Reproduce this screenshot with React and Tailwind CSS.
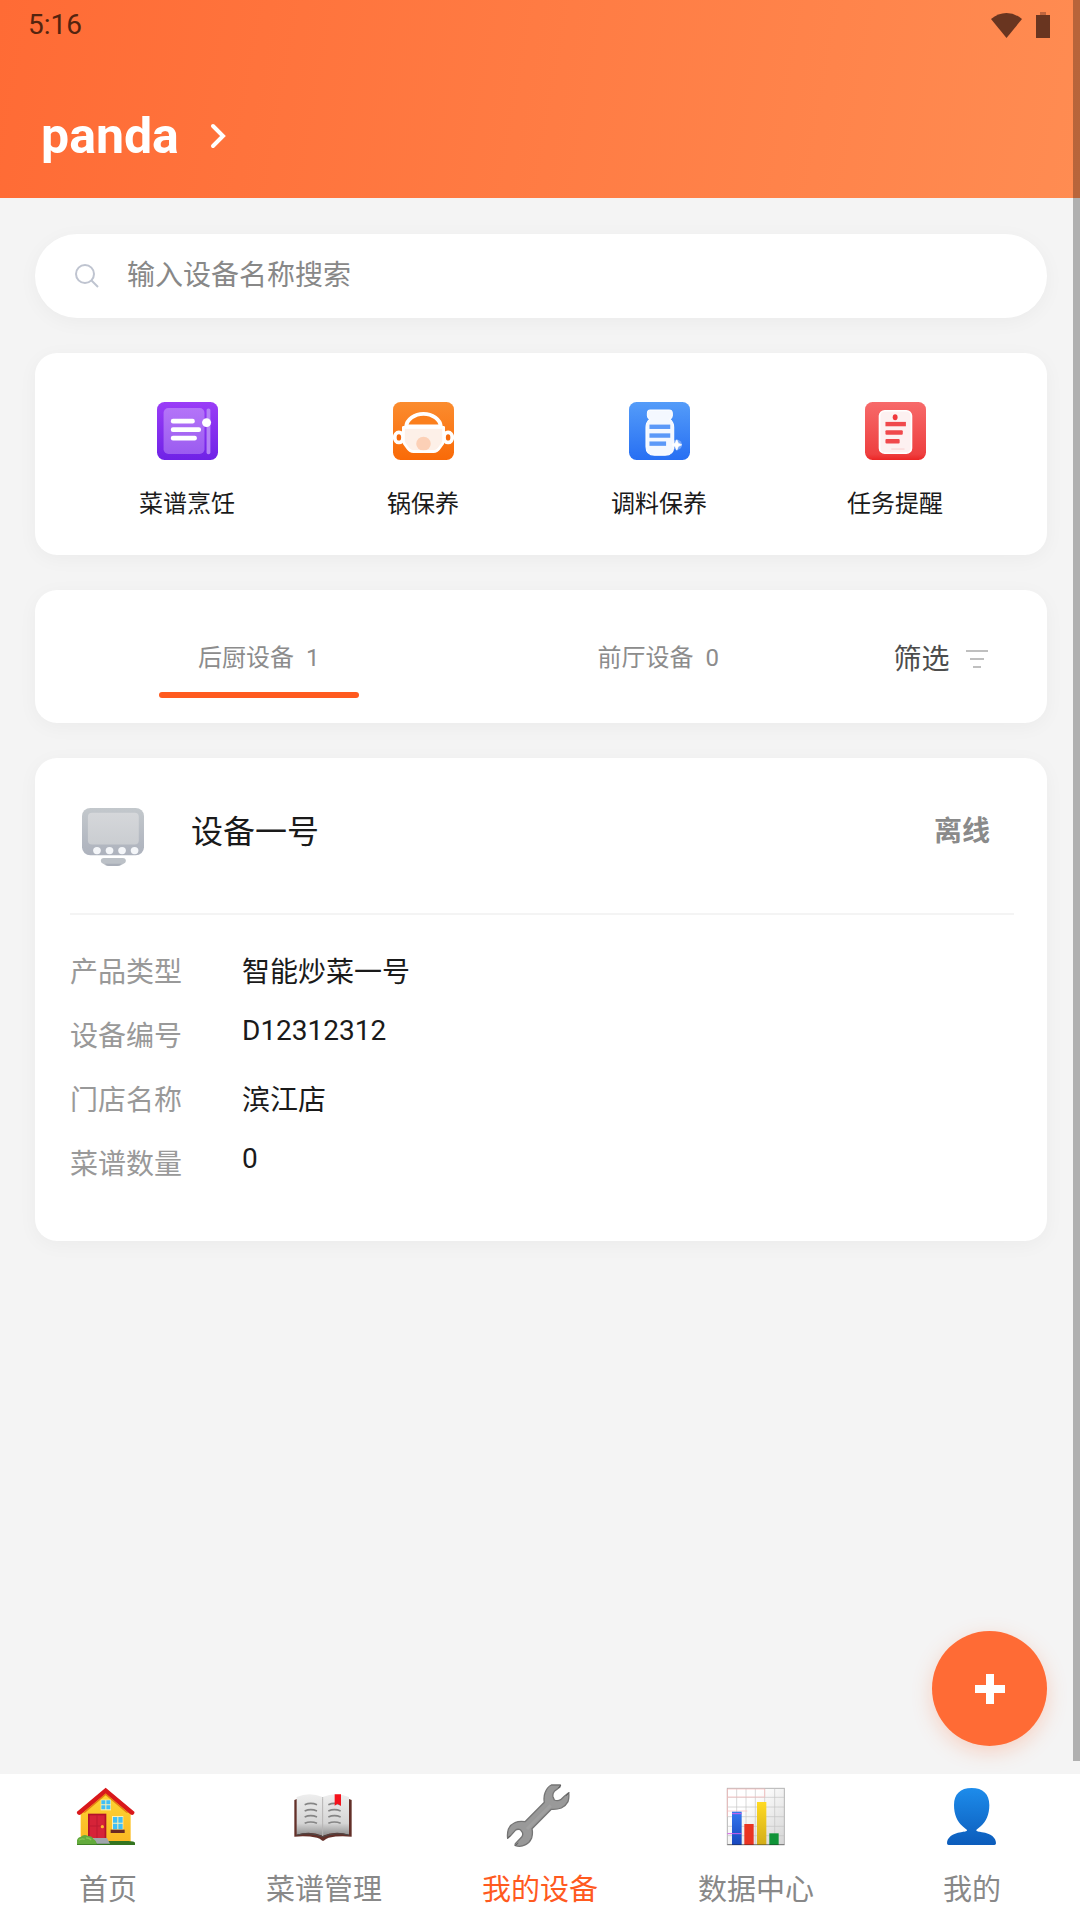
import React, { useState } from "react";

const RecipeIcon = () => (
  <svg viewBox="398 547 176 172" preserveAspectRatio="none" className="w-[61px] h-[58px]" aria-hidden="true">
    <defs>
      <linearGradient id="recipeBg" x1="0" y1="0" x2="0" y2="1">
        <stop offset="0" stopColor="#9a3df7" />
        <stop offset="1" stopColor="#6f22e6" />
      </linearGradient>
      <linearGradient id="recipePage" x1="0" y1="0" x2="0" y2="1">
        <stop offset="0" stopColor="#b474f8" />
        <stop offset="1" stopColor="#9b5cf0" />
      </linearGradient>
    </defs>
    <rect x="398" y="547" width="176" height="172" rx="22" fill="url(#recipeBg)" />
    <rect x="417" y="565" width="118" height="136" rx="14" fill="url(#recipePage)" />
    <rect x="541" y="566" width="11" height="136" rx="5" fill="#b583f6" />
    <rect x="438" y="597" width="69" height="14" rx="6" fill="#fff" />
    <rect x="438" y="622" width="87" height="14" rx="6" fill="#fff" />
    <rect x="438" y="647" width="75" height="14" rx="6" fill="#fff" />
    <circle cx="541" cy="608" r="13" fill="#fff" />
  </svg>
);

const PotIcon = () => (
  <svg viewBox="1083 547 176 172" preserveAspectRatio="none" className="w-[61px] h-[58px]" aria-hidden="true">
    <defs>
      <linearGradient id="potBg" x1="0" y1="0" x2="0" y2="1">
        <stop offset="0" stopColor="#fb8c2e" />
        <stop offset="1" stopColor="#f96a08" />
      </linearGradient>
    </defs>
    <rect x="1083" y="547" width="176" height="172" rx="22" fill="url(#potBg)" />
    <ellipse cx="1100" cy="652" rx="12" ry="15" fill="#f5690c" stroke="#fff" strokeWidth="11" />
    <ellipse cx="1242" cy="652" rx="12" ry="15" fill="#f5690c" stroke="#fff" strokeWidth="11" />
    <path
      d="M1113 622h116v40q0 4-3 9l-10 14q-6 9-16 9h-58q-10 0-16-9l-10-14q-3-5-3-9z"
      fill="#fdf0e8"
      stroke="#fff"
      strokeWidth="8"
      strokeLinejoin="round"
    />
    <path d="M1121 619c2-20 24-37 50-37s48 17 50 37z" fill="#fb7f1c" stroke="#fff" strokeWidth="11" strokeLinejoin="round" />
    <ellipse cx="1171" cy="671" rx="21" ry="21" fill="#fcd0b6" />
    <rect x="1140" y="690" width="62" height="6" fill="#fff" />
  </svg>
);

const BottleIcon = () => (
  <svg viewBox="258 547 176 172" preserveAspectRatio="none" className="w-[61px] h-[58px]" aria-hidden="true">
    <defs>
      <linearGradient id="bottleBg" x1="0" y1="0" x2="0" y2="1">
        <stop offset="0" stopColor="#549cf9" />
        <stop offset="1" stopColor="#276ff3" />
      </linearGradient>
    </defs>
    <rect x="258" y="547" width="176" height="172" rx="22" fill="url(#bottleBg)" />
    <path
      d="M319 571h55q9 0 9 10v7q0 7-7 10 11 10 11 24v58q0 25-25 25h-30q-25 0-25-25v-58q0-14 11-24-7-3-7-10v-7q0-10 8-10z"
      fill="#f4f8ff"
      stroke="#fff"
      strokeWidth="3"
    />
    <rect x="317" y="614" width="60" height="13" fill="#5c99f8" />
    <rect x="317" y="640" width="60" height="13" fill="#5c99f8" />
    <rect x="317" y="664" width="48" height="13" fill="#5c99f8" />
    <circle cx="396" cy="674" r="15" fill="#fff" opacity=".35" />
    <path d="M396 659l4 10 10 5-10 5-4 11-5-11-9-5 9-5z" fill="#fff" stroke="#fff" strokeWidth="2" />
  </svg>
);

const TaskIcon = () => (
  <svg viewBox="944 547 176 172" preserveAspectRatio="none" className="w-[61px] h-[58px]" aria-hidden="true">
    <defs>
      <linearGradient id="taskBg" x1="0" y1="0" x2="0" y2="1">
        <stop offset="0" stopColor="#f76a6a" />
        <stop offset=".9" stopColor="#ee4040" />
        <stop offset="1" stopColor="#ec2525" />
      </linearGradient>
    </defs>
    <rect x="944" y="547" width="176" height="172" rx="22" fill="url(#taskBg)" />
    <rect x="986" y="573" width="92" height="126" rx="15" fill="#fdf1f1" stroke="#fff" strokeWidth="5" />
    <ellipse cx="1031" cy="592" rx="7" ry="9" fill="#f0383c" />
    <rect x="1003" y="606" width="59" height="13" fill="#f0494c" />
    <rect x="1003" y="631" width="50" height="13" rx="3" fill="#f0494c" />
    <rect x="1003" y="657" width="41" height="13" rx="3" fill="#f0494c" />
    <rect x="1020" y="684" width="38" height="5" fill="#fbdcdc" />
  </svg>
);

const DeviceIcon = () => (
  <svg viewBox="180 685 178 173" preserveAspectRatio="none" className="w-[62px] h-[58px]" aria-hidden="true">
    <defs>
      <linearGradient id="deviceBody" x1="0" y1="0" x2="0" y2="1">
        <stop offset="0" stopColor="#c3c8cc" />
        <stop offset="1" stopColor="#adb2bd" />
      </linearGradient>
      <linearGradient id="deviceScreen" x1="0" y1="0" x2="0" y2="1">
        <stop offset="0" stopColor="#d5d7da" />
        <stop offset="1" stopColor="#cacdd1" />
      </linearGradient>
    </defs>
    <rect x="180" y="685" width="178" height="141" rx="24" fill="url(#deviceBody)" />
    <rect x="197" y="699" width="146" height="95" rx="12" fill="url(#deviceScreen)" />
    <circle cx="223" cy="812" r="11" fill="#f4f6f9" />
    <circle cx="259" cy="812" r="11" fill="#f4f6f9" />
    <circle cx="295" cy="812" r="11" fill="#f4f6f9" />
    <circle cx="331" cy="812" r="11" fill="#f4f6f9" />
    <path d="M243 834h54q9 0 9 9 0 6-8 9-8 6-16 6h-26q-8 0-14-6-8-3-8-9 0-9 9-9z" fill="#bcc1c7" />
    <path d="M246 851h48q-6 7-14 7h-22q-8 0-12-7z" fill="#a9aeb8" />
  </svg>
);

const HomeEmoji = () => (
  <svg viewBox="228 72 192 192" className="w-16 h-16 overflow-visible" aria-hidden="true">
    <defs>
      <linearGradient id="wall" x1="0" y1="0" x2="0" y2="1">
        <stop offset="0" stopColor="#fdd835" />
        <stop offset="1" stopColor="#fbb823" />
      </linearGradient>
    </defs>
    <path d="M242 246V155l75-66 75 66v91z" fill="url(#wall)" />
    <path d="M231 251q2-8 20-8h134q18 0 20 5v7H231z" fill="#33741f" />
    <path d="M317 83l-86 72q-2 4 2 8 5 4 10 0l74-62 74 62q6 4 10 0 4-4 2-8z" fill="#d9181b" />
    <path d="M317 100l-68 58h6l62-52 62 52h6z" fill="#e57e12" />
    <rect x="264" y="161" width="55" height="73" fill="#b3122a" />
    <rect x="269" y="166" width="45" height="68" fill="#d62338" />
    <path d="M291 166v68M269 198h45" stroke="#bd1b30" strokeWidth="3" />
    <circle cx="307" cy="200" r="5" fill="#fdb92b" />
    <rect x="302" y="119" width="31" height="32" fill="#fff0b0" />
    <path d="M304 121h12v12h-12zM319 121h12v12h-12zM304 136h12v12h-12zM319 136h12v12h-12z" fill="#40bff5" />
    <rect x="336" y="168" width="34" height="41" fill="#fff0b0" />
    <path d="M339 171h13v17h-13zM355 171h13v17h-13zM339 191h13v17h-13zM355 191h13v17h-13z" fill="#40bff5" />
    <rect x="332" y="209" width="42" height="10" fill="#6b2a23" />
    <path d="M279 234h42l9 17h-40z" fill="#a2a5ad" />
    <path d="M231 253v-12q2-9 11-10 10-11 22-3 13 0 16 9 10 6 10 16z" fill="#63ab3c" />
    <path d="M237 241q8-7 17-3M258 234q12-1 15 7" stroke="#82c653" strokeWidth="4" fill="none" />
  </svg>
);

const BookEmoji = () => (
  <svg viewBox="876 72 192 192" className="w-16 h-16 overflow-visible" aria-hidden="true">
    <defs>
      <linearGradient id="page" x1="0" y1="0" x2="0" y2="1">
        <stop offset="0" stopColor="#eeeeee" />
        <stop offset=".7" stopColor="#d5d5d5" />
        <stop offset="1" stopColor="#8f8f8f" />
      </linearGradient>
    </defs>
    <path d="M883 120l8-3h156l8 3v110q-38-4-69 3-8 3-15 9h-4q-8-7-16-9-33-7-68-3z" fill="#633029" />
    <path d="M890 111q38-16 78 0v116q-39-16-78-3z" fill="url(#page)" />
    <path d="M968 111q40-16 79 0v113q-40-13-79 3z" fill="url(#page)" />
    <path d="M890 225q40-10 78 5 39-15 79-5" stroke="#4b4b4b" strokeWidth="3" fill="none" />
    <path d="M968 111v117" stroke="#bbb" strokeWidth="3" />
    <path
      d="M914 134q18-8 37 0M914 153q18-8 37 0M914 171q18-8 37 0M914 190q18-8 37 0M985 134q18-8 37 0M985 153q18-8 37 0M985 171q18-8 37 0M985 190q18-8 37 0"
      stroke="#858585"
      strokeWidth="5"
      fill="none"
    />
    <path d="M1004 103h19v35l-10-7-9 6z" fill="#f5121c" />
  </svg>
);

const WrenchEmoji = () => (
  <svg viewBox="384 72 192 192" className="w-16 h-16 overflow-visible" aria-hidden="true">
    <path
      d="M514 75h27l-1 6-17 13q-6 7-4 16l4 10q10 4 19-1l11-10 13-11q2 14-2 27-7 13-20 19-13 5-30 4l-58 58q3 15-1 28-6 14-18 20-17 9-32 2l1-5 19-20q5-6 2-14l-6-8q-9-3-15 2l-16 18-7 6q-2-14 2-27 6-14 20-20 13-6 30-3l58-58q-3-17 3-31 6-15 18-21z"
      fill="#999"
      stroke="#757575"
      strokeWidth="4"
      strokeLinejoin="round"
    />
    <path d="M512 136l-71 71" stroke="#a0a0a0" strokeWidth="9" />
    <path d="M543 75l-8 9M568 98l-10 9M383 234l8-7M406 257l9-8" stroke="#5e5e5e" strokeWidth="3" />
  </svg>
);

const ChartEmoji = () => (
  <svg viewBox="72 72 192 192" className="w-16 h-16 overflow-visible" aria-hidden="true">
    <defs>
      <linearGradient id="sheet" x1="0" y1="0" x2="1" y2="1">
        <stop offset=".3" stopColor="#fff" />
        <stop offset="1" stopColor="#d4d4d4" />
      </linearGradient>
      <linearGradient id="barBlue" x1="0" y1="0" x2="0" y2="1">
        <stop offset="0" stopColor="#3478f0" />
        <stop offset="1" stopColor="#1746bd" />
      </linearGradient>
      <linearGradient id="barYellow" x1="0" y1="0" x2="0" y2="1">
        <stop offset="0" stopColor="#ffda22" />
        <stop offset="1" stopColor="#d3ad19" />
      </linearGradient>
    </defs>
    <rect x="82" y="85" width="171" height="169" fill="url(#sheet)" stroke="#b4b4b4" strokeWidth="3" />
    <path d="M110 85v169M138 85v169M166 85v169M194 85v169M224 85v169" stroke="#c4c4c4" strokeWidth="2" />
    <path d="M82 112h171M82 141h171M82 170h171M82 199h171M82 227h171" stroke="#c4c4c4" strokeWidth="2" />
    <path d="M82 170V87h112v24H82M82 153h60" stroke="#ffb9b9" strokeWidth="2" fill="none" />
    <rect x="96" y="155" width="29" height="100" fill="url(#barBlue)" />
    <rect x="133" y="192" width="28" height="63" fill="#e93423" />
    <rect x="171" y="126" width="28" height="129" fill="url(#barYellow)" />
    <rect x="208" y="220" width="28" height="35" fill="#109438" />
    <path d="M96 161h29M82 221h43" stroke="#d45fe8" strokeWidth="3" />
    <path d="M82 254h171" stroke="#222" strokeWidth="3" opacity=".45" />
  </svg>
);

const UserEmoji = () => (
  <svg viewBox="720 72 192 192" className="w-16 h-16 overflow-visible" aria-hidden="true">
    <defs>
      <linearGradient id="bust" x1="0" y1="0" x2="0" y2="1">
        <stop offset="0" stopColor="#1d8ceb" />
        <stop offset="1" stopColor="#0c5cbb" />
      </linearGradient>
    </defs>
    <path
      d="M815 84c34 0 53 18 53 51 0 30-10 49-25 63-8 7-14 10-14 13 0 4 8 4 17 6 27 4 42 16 42 33q0 5-5 5H746q-5 0-5-5c0-17 16-29 42-33 9-2 18-2 18-6 0-3-7-6-14-13-15-14-25-33-25-63 0-33 19-51 53-51z"
      fill="url(#bust)"
    />
  </svg>
);

const shortcuts = [
  { label: "菜谱烹饪", icon: RecipeIcon },
  { label: "锅保养", icon: PotIcon },
  { label: "调料保养", icon: BottleIcon },
  { label: "任务提醒", icon: TaskIcon },
];

const deviceTabs = [
  { id: "kitchen", label: "后厨设备", count: 1 },
  { id: "hall", label: "前厅设备", count: 0 },
];

const deviceInfo = [
  { label: "产品类型", value: "智能炒菜一号" },
  { label: "设备编号", value: "D12312312", latin: true },
  { label: "门店名称", value: "滨江店" },
  { label: "菜谱数量", value: "0", latin: true },
];

const navItems = [
  { label: "首页", icon: HomeEmoji },
  { label: "菜谱管理", icon: BookEmoji },
  { label: "我的设备", icon: WrenchEmoji, active: true },
  { label: "数据中心", icon: ChartEmoji },
  { label: "我的", icon: UserEmoji },
];

function Header() {
  return (
    <header className="h-[198px] bg-linear-[100deg] from-[#ff6b35] to-[#ff8c52] text-white">
      {/* Status bar */}
      <div className="flex items-center justify-between pl-7 pr-[30px] h-[50px]">
        <span className="text-[28px] text-[#54240f]">5:16</span>
        <div className="flex items-center gap-[14px]">
          <svg viewBox="0 0 31 25" className="w-[31px] h-[25px]" aria-hidden="true">
            <path d="M0 6Q7 0 15.500 0T31 6L15.500 25z" fill="#693520" />
          </svg>
          <svg viewBox="0 0 14 26" className="w-[14px] h-[26px]" aria-hidden="true">
            <path d="M4 0h6v4H4z" fill="#c0663f" />
            <path d="M0 3h14v23H0z" fill="#693520" />
          </svg>
        </div>
      </div>
      <button type="button" className="flex items-center gap-[30px] mt-14 ml-[41px] cursor-pointer">
        <span className="text-[50px] leading-[60px] font-bold">panda</span>
        <svg viewBox="0 0 18 26" className="w-[18px] h-[26px]" fill="none" aria-hidden="true">
          <path d="M4 3l10 10L4 23" stroke="#fff" strokeWidth="4" strokeLinecap="round" />
        </svg>
      </button>
    </header>
  );
}

function Card({ className, children }) {
  return (
    <section className={`bg-white rounded-[22px] shadow-[0_4px_20px_rgba(0,0,0,0.04)] ${className}`}>
      {children}
    </section>
  );
}

function App() {
  const [keyword, setKeyword] = useState("");
  const [activeTab, setActiveTab] = useState("kitchen");

  return (
    <div className="flex flex-col min-h-screen bg-[#f4f4f4] font-[Roboto,'Noto_Sans_CJK_SC',sans-serif]">
      <Header />

      <main className="flex-1 flex flex-col gap-[35px] pt-9 pl-[35px] pr-[33px] pb-10">
        {/* Search */}
        <label className="flex items-center gap-7 h-[84px] px-10 bg-white rounded-full shadow-[0_4px_20px_rgba(0,0,0,0.04)]">
          <svg viewBox="0 0 24 24" className="w-6 h-6" fill="none" stroke="#bfc4d0" strokeWidth="2" aria-hidden="true">
            <circle cx="10" cy="10" r="9" />
            <path d="M16 16l7 7" />
          </svg>
          <input
            type="search"
            aria-label="搜索设备"
            value={keyword}
            onChange={(e) => setKeyword(e.target.value)}
            className="flex-1 text-[28px] leading-10 text-[#222] placeholder:text-[#888] focus:outline-none"
            placeholder="输入设备名称搜索"
          />
        </label>

        {/* Shortcuts */}
        <Card className="grid grid-cols-4 pt-[49px] pb-[33px] px-[34px]">
          {shortcuts.map(({ label, icon: Icon }) => (
            <button key={label} type="button" className="flex flex-col items-center gap-[26px] cursor-pointer">
              <Icon />
              <span className="text-2xl leading-9 text-[#1a1a1a]">{label}</span>
            </button>
          ))}
        </Card>

        {/* Tabs */}
        <Card className="flex items-start pt-11 pb-[25px] px-6">
          {deviceTabs.map((tab) => (
            <button
              key={tab.id}
              type="button"
              onClick={() => setActiveTab(tab.id)}
              className="flex-1 flex flex-col items-center gap-[10px] cursor-pointer"
            >
              <span className="flex gap-3 text-2xl leading-[48px] text-[#8c8c8c]">
                <span>{tab.label}</span>
                <span>{tab.count}</span>
              </span>
              <span
                className={`w-1/2 h-[6px] rounded-full ${activeTab === tab.id ? "bg-[#ff5a1f]" : "bg-transparent"}`}
              />
            </button>
          ))}
          <button type="button" className="flex items-center justify-center gap-4 w-[165px] cursor-pointer">
            <span className="text-[28px] leading-[52px] text-[#4d4d4d]">筛选</span>
            <svg viewBox="0 0 22 20" className="w-[22px] h-5" fill="none" stroke="#bfbfbf" strokeWidth="2" aria-hidden="true">
              <path d="M0 1h22M4 9h14M7 17h8" />
            </svg>
          </button>
        </Card>

        {/* Device */}
        <Card className="pt-[50px] pb-[54px] pl-[35px] pr-[33px]">
          <div className="flex items-start pl-3 pr-6 pb-[47px] border-b-2 border-[#f4f4f4]">
            <DeviceIcon />
            <h2 className="flex-1 pl-[47px] text-[32px] leading-[48px] text-[#1a1a1a]">设备一号</h2>
            <span className="text-[28px] leading-[48px] font-bold text-[#8a8a8a]">离线</span>
          </div>
          <dl className="flex flex-col gap-5 pt-9 text-[28px] leading-[44px]">
            {deviceInfo.map((row) => (
              <div key={row.label} className="flex items-start">
                <dt className="w-[172px] text-[#999]">{row.label}</dt>
                <dd className={`text-[#1a1a1a] ${row.latin ? "leading-8" : ""}`}>{row.value}</dd>
              </div>
            ))}
          </dl>
        </Card>
      </main>

      {/* Bottom navigation */}
      <nav className="sticky bottom-0 grid grid-cols-5 pt-[10px] pb-[10px] bg-white">
        {navItems.map(({ label, icon: Icon, active }) => (
          <a key={label} href="#" className="flex flex-col items-center gap-[22px]">
            <Icon />
            <span className={`text-[29px] leading-10 ${active ? "text-[#ff5a1f]" : "text-[#888]"}`}>{label}</span>
          </a>
        ))}
      </nav>

      <button
        type="button"
        aria-label="添加设备"
        className="fixed right-[33px] bottom-[174px] flex items-center justify-center size-[115px] rounded-full bg-[#ff6b35] shadow-[0_6px_20px_rgba(255,107,53,0.25)] cursor-pointer"
      >
        <svg viewBox="0 0 30 30" className="w-[30px] h-[30px]" aria-hidden="true">
          <path d="M11 0h8v11h11v8H19v11h-8V19H0v-8h11z" fill="#fff" />
        </svg>
      </button>

      {/* Scroll indicator */}
      <div className="fixed top-0 right-0 bottom-[159px] w-[7px] bg-black/28" />
    </div>
  );
}

export default App;
